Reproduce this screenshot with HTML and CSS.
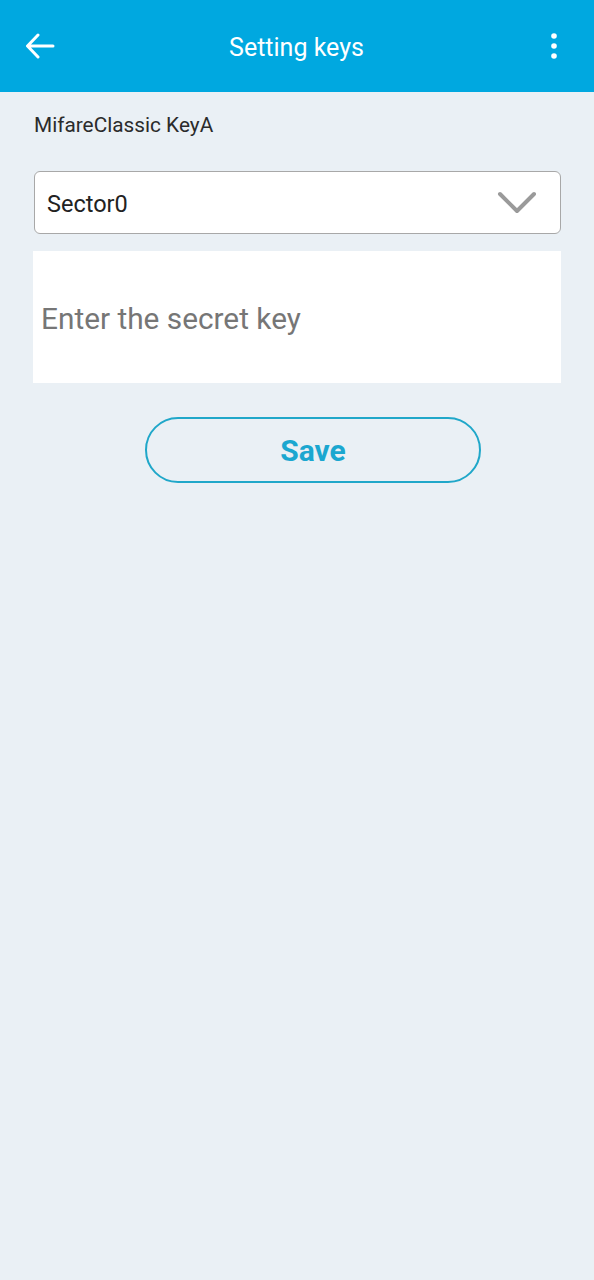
FILE: index.html
```html
<!DOCTYPE html>
<html>
<head>
<meta charset="utf-8">
<link rel="stylesheet" href="styles.css">
</head>
<body>
<header class="appbar">
  <div class="icon back">
    <svg width="30" height="26" viewBox="0 0 30 26"><path d="M28 13H3M13 2L2.5 13L13 24" fill="none" stroke="#fff" stroke-width="3" stroke-linecap="round" stroke-linejoin="round"/></svg>
  </div>
  <div class="title">Setting keys</div>
  <div class="icon more">
    <svg width="8" height="26" viewBox="0 0 8 26"><circle cx="4" cy="3" r="2.8" fill="#fff"/><circle cx="4" cy="13" r="2.8" fill="#fff"/><circle cx="4" cy="23" r="2.8" fill="#fff"/></svg>
  </div>
</header>
<main class="content">
  <div class="label">MifareClassic KeyA</div>
  <div class="select">
    <span class="select-text">Sector0</span>
    <svg class="chev" width="40" height="24" viewBox="0 0 40 24"><path d="M3 3L20 20L37 3" fill="none" stroke="#9a9a9a" stroke-width="4" stroke-linecap="round" stroke-linejoin="round"/></svg>
  </div>
  <div class="input">
    <span class="placeholder">Enter the secret key</span>
  </div>
  <div class="btn-row">
    <div class="save">Save</div>
  </div>
</main>
</body>
</html>
```

FILE: styles.css
```css
html, body {
  margin: 0;
  padding: 0;
}
body {
  width: 594px;
  min-height: 1280px;
  background: #eaf0f5;
  font-family: Roboto, "Noto Sans", sans-serif;
}
.appbar {
  height: 92px;
  background: #00a8e0;
  display: flex;
  align-items: center;
  justify-content: space-between;
  padding: 0 26px 0 25px;
  box-sizing: border-box;
}
.icon {
  display: flex;
  align-items: center;
}
.back {
  width: 40px;
}
.more {
  width: 40px;
  justify-content: flex-end;
  padding-right: 10px;
  box-sizing: border-box;
}
.title {
  color: #fff;
  font-size: 25px;
  margin-top: 2px;
}
.content {
  padding: 0 33px 0 33px;
}
.label {
  font-size: 20.8px;
  color: #2b2b2b;
  margin: 0 0 0 1px;
  padding-top: 21px;
  height: 28px;
  line-height: 24px;
}
.select {
  margin-top: 30px;
  margin-left: 1px;
  height: 61px;
  background: #fff;
  border: 1px solid #a8a8a8;
  border-radius: 6px;
  display: flex;
  align-items: center;
  justify-content: space-between;
  padding: 0 23px 0 12px;
}
.select-text {
  font-size: 23.5px;
  color: #222;
  margin-top: 2px;
}
.input {
  margin-top: 17px;
  height: 132px;
  background: #fff;
  display: flex;
  align-items: center;
  padding-left: 8px;
}
.placeholder {
  font-size: 29.8px;
  color: #767676;
  margin-top: 2px;
}
.btn-row {
  display: flex;
  padding-left: 112px;
  margin-top: 34px;
}
.save {
  width: 332px;
  height: 62px;
  border: 2px solid #20a7c9;
  border-radius: 33px;
  display: flex;
  align-items: center;
  justify-content: center;
  font-size: 30px;
  font-weight: bold;
  color: #1ba7d0;
}
```
